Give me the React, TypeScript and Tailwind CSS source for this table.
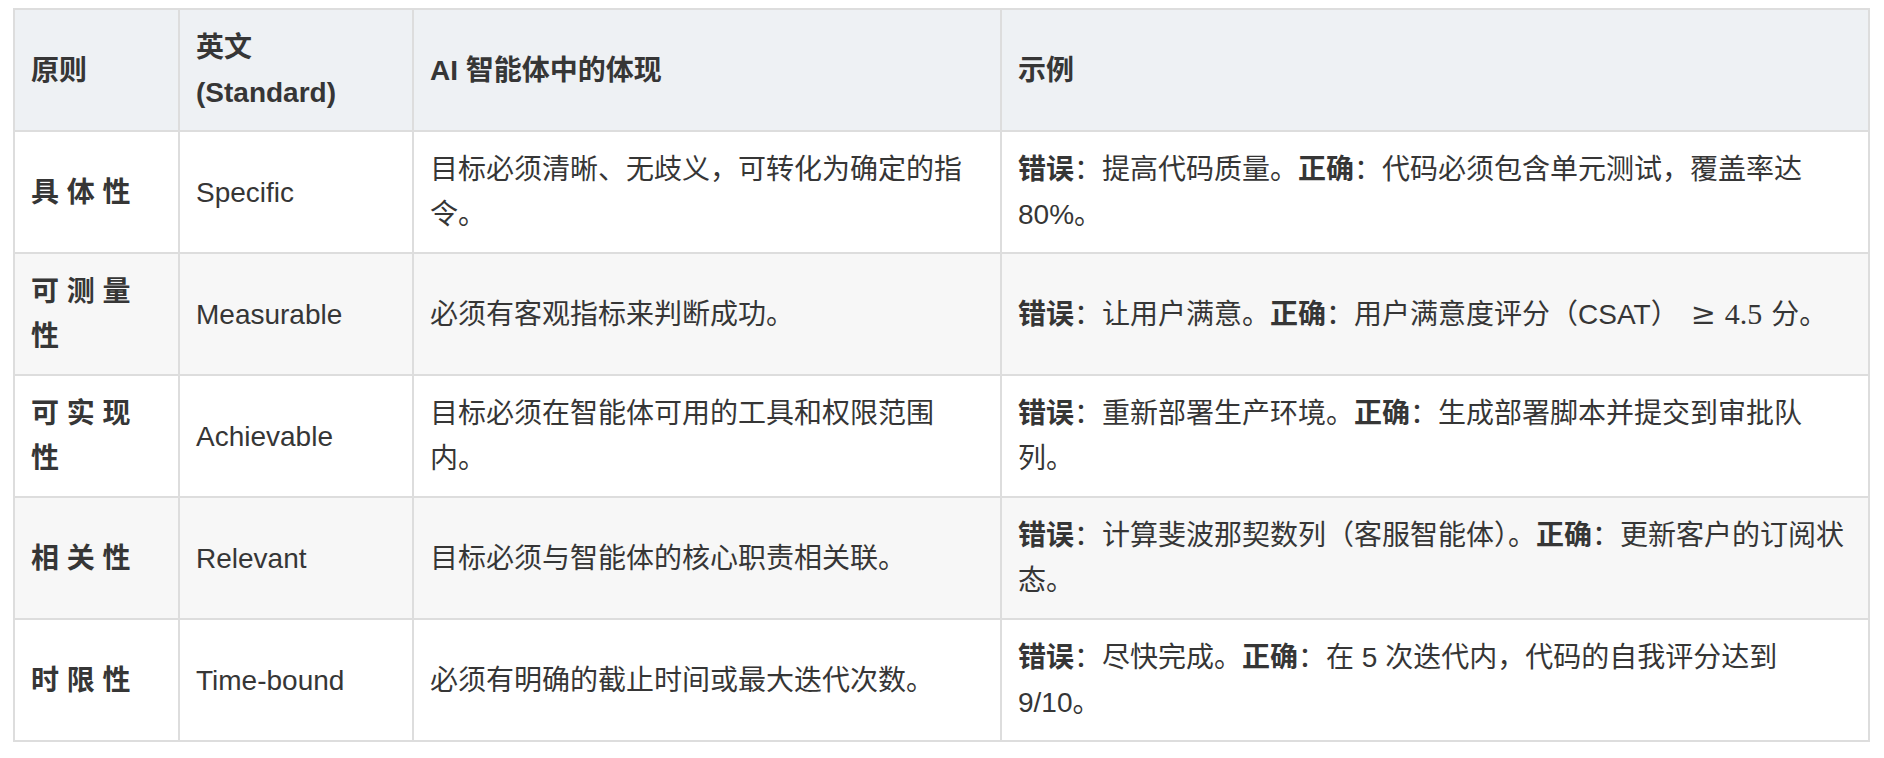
const rows = [
  {
    name: "具 体 性",
    en: "Specific",
    desc: "目标必须清晰、无歧义，可转化为确定的指令。",
    wrong: "提高代码质量。",
    right: <>代码必须包含单元测试，覆盖率达 80%。</>,
  },
  {
    name: "可 测 量 性",
    en: "Measurable",
    desc: "必须有客观指标来判断成功。",
    wrong: "让用户满意。",
    right: (
      <>
        用户满意度评分（CSAT）
        <span className="ml-[12px] font-['DejaVu_Serif',serif] text-[30px] leading-none">≥</span>
        <span className="ml-[9px] font-['Liberation_Serif',serif] text-[30px] leading-none">4.5</span>
        <span className="ml-[9px]">分。</span>
      </>
    ),
  },
  {
    name: "可 实 现 性",
    en: "Achievable",
    desc: "目标必须在智能体可用的工具和权限范围内。",
    wrong: "重新部署生产环境。",
    right: <>生成部署脚本并提交到审批队列。</>,
  },
  {
    name: "相 关 性",
    en: "Relevant",
    desc: "目标必须与智能体的核心职责相关联。",
    wrong: "计算斐波那契数列（客服智能体）。",
    right: <>更新客户的订阅状态。</>,
  },
  {
    name: "时 限 性",
    en: "Time-bound",
    desc: "必须有明确的截止时间或最大迭代次数。",
    wrong: "尽快完成。",
    right: <>在 5 次迭代内，代码的自我评分达到 9/10。</>,
  },
];

const cell = "border-2 border-[#dddddd] px-[16px] py-[15px] align-middle";

export default function App() {
  return (
    <div className="min-h-screen bg-white pl-[13px] pr-[14px] pt-[8px] font-['Liberation_Sans','Noto_Sans_CJK_SC',sans-serif] text-[28px] leading-[45px] text-[#363636]">
      <table className="w-full table-fixed border-collapse text-left">
        <colgroup>
          <col className="w-[165px]" />
          <col className="w-[234px]" />
          <col className="w-[588px]" />
          <col />
        </colgroup>
        <thead>
          <tr className="bg-[#eef1f4]">
            <th className={`${cell} font-bold`}>原则</th>
            <th className={`${cell} font-bold`}>
              英文
              <br />
              (Standard)
            </th>
            <th className={`${cell} font-bold`}>AI 智能体中的体现</th>
            <th className={`${cell} font-bold`}>示例</th>
          </tr>
        </thead>
        <tbody>
          {rows.map((r, i) => (
            <tr key={r.en} className={i % 2 === 1 ? "bg-[#f7f7f7]" : "bg-white"}>
              <td className={`${cell} font-bold`}>{r.name}</td>
              <td className={cell}>{r.en}</td>
              <td className={cell}>{r.desc}</td>
              <td className={cell}>
                <strong className="font-bold">错误</strong>：{r.wrong}
                <strong className="font-bold">正确</strong>：{r.right}
              </td>
            </tr>
          ))}
        </tbody>
      </table>
    </div>
  );
}
